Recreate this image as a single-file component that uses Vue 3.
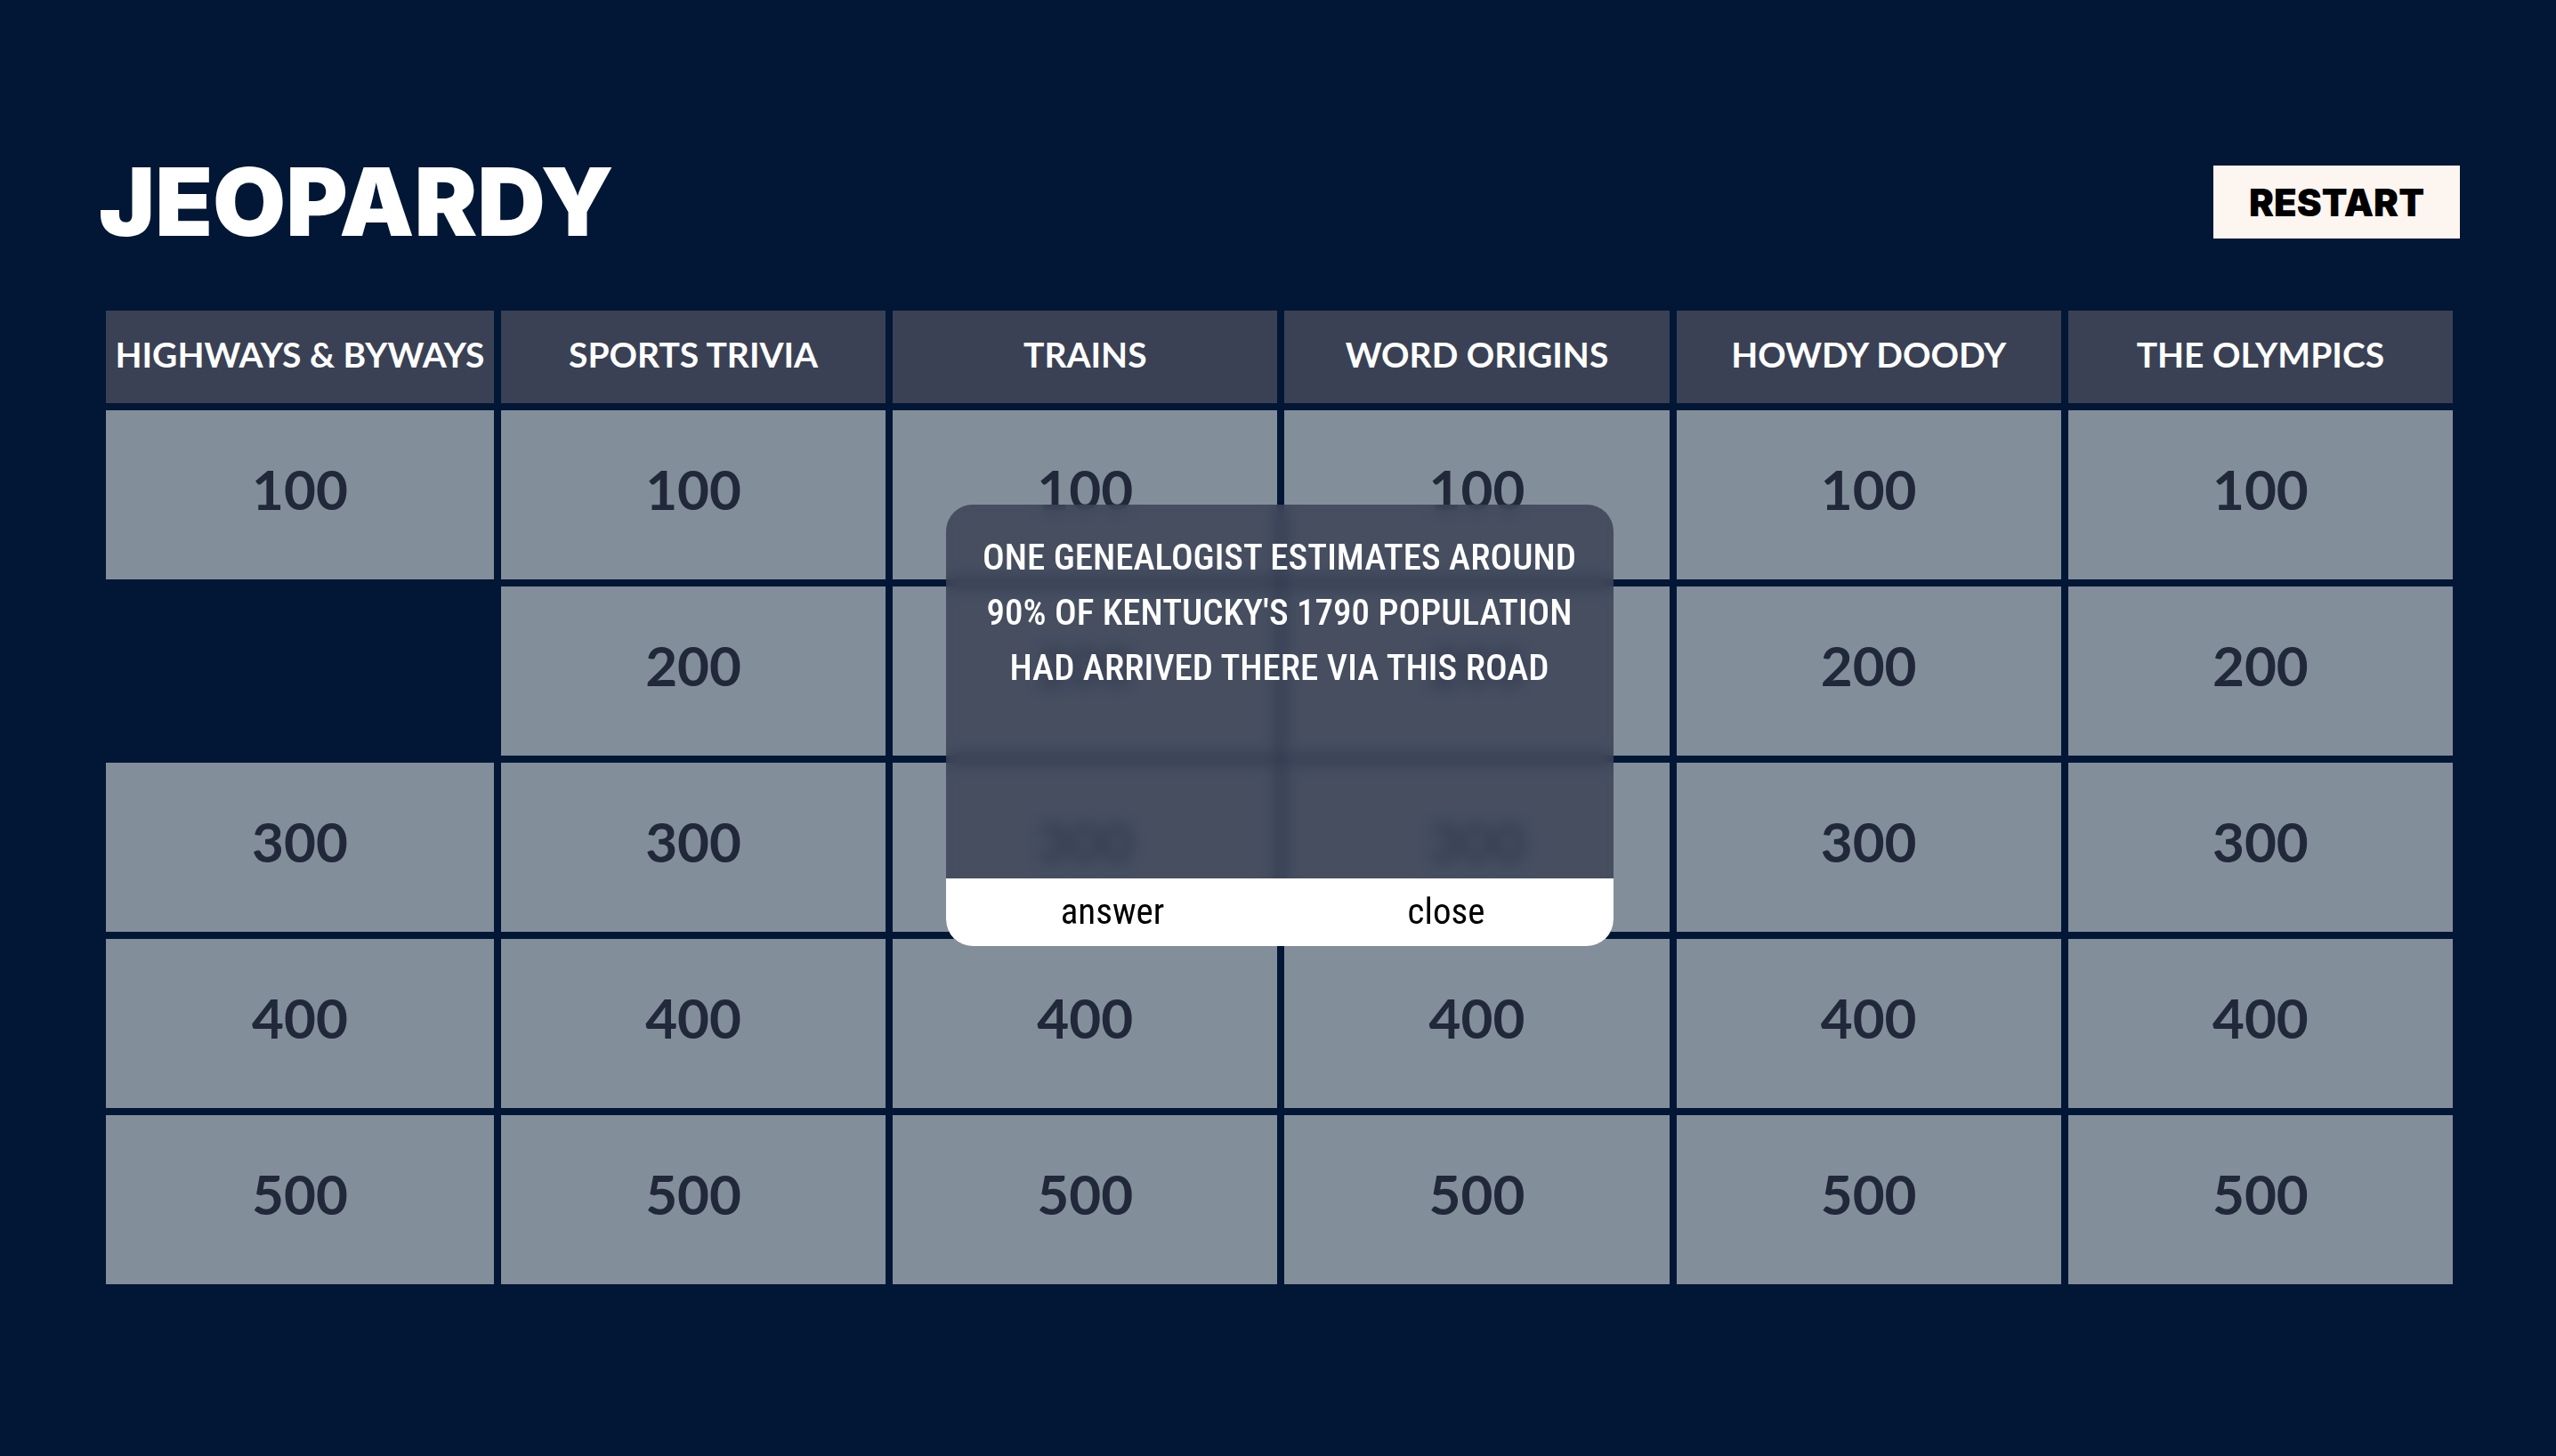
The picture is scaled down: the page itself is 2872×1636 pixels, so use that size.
<script setup>
import { reactive, ref } from 'vue'

const categories = [
  'Highways & Byways',
  'Sports Trivia',
  'Trains',
  'Word Origins',
  'Howdy Doody',
  'The Olympics',
]
const values = [100, 200, 300, 400, 500]

const used = reactive(new Set(['0-200']))
const open = ref(true)

function pick(column, value) {
  used.add(`${column}-${value}`)
  open.value = true
}

function restart() {
  used.clear()
  open.value = false
}
</script>

<template>
  <main class="page">
    <header class="top">
      <h1 class="title">JEOPARDY</h1>
      <button class="restart" type="button" @click="restart">RESTART</button>
    </header>

    <div class="board">
      <table class="grid">
        <colgroup>
          <col class="lead" />
          <col v-for="n in 5" :key="n" />
        </colgroup>
        <thead>
          <tr>
            <th v-for="name in categories" :key="name" scope="col">{{ name }}</th>
          </tr>
        </thead>
        <tbody>
          <tr v-for="value in values" :key="value">
            <td v-for="(name, column) in categories" :key="name">
              <button
                v-if="!used.has(`${column}-${value}`)"
                class="clue"
                type="button"
                @click="pick(column, value)"
              >{{ value }}</button>
            </td>
          </tr>
        </tbody>
      </table>

      <section v-if="open" class="modal" role="dialog" aria-labelledby="question">
        <p id="question" class="question">One genealogist estimates around 90% of Kentucky's 1790 population had arrived there via this road</p>
        <div class="actions">
          <button class="action" type="button">answer</button>
          <button class="action" type="button" @click="open = false">close</button>
        </div>
      </section>
    </div>
  </main>
</template>

<style>
html {
  background: #021735;
}
</style>

<style scoped>
.page {
  padding: 177px 108px 0 111px;
  color: #fff;
  font-family: Lato, "Open Sans", sans-serif;
}

.top {
  display: flex;
  align-items: center;
  justify-content: space-between;
  height: 100px;
}

.title {
  margin: 0;
  font-family: Inter, sans-serif;
  font-size: 106px;
  font-weight: 900;
  line-height: 100px;
}

.restart {
  height: 82px;
  padding: 0 40px;
  border: 0;
  background: #fdf5ef;
  color: #000;
  font-family: Inter, sans-serif;
  font-size: 42px;
  font-weight: 900;
}

.board {
  position: relative;
  margin-top: 64px;
}

.grid {
  width: 100%;
  table-layout: fixed;
  border-collapse: separate;
  border-spacing: 8px;
}

.lead {
  width: 436px;
}

th {
  height: 104px;
  box-sizing: border-box;
  padding: 0 0 6px;
  background: #3a4154;
  font-size: 39px;
  font-weight: 700;
  text-transform: uppercase;
  white-space: nowrap;
}

td {
  height: 190px;
  padding: 0;
}

.clue {
  display: block;
  width: 100%;
  height: 190px;
  padding: 0 0 14px;
  border: 0;
  background: #838e9b;
  color: #20283a;
  font-family: inherit;
  font-size: 62px;
  font-weight: 700;
}

.modal {
  position: absolute;
  top: 226px;
  left: 50%;
  display: flex;
  flex-direction: column;
  box-sizing: border-box;
  width: 750px;
  min-height: 496px;
  margin-left: -375px;
  overflow: hidden;
  border-radius: 30px;
  background: rgba(55, 63, 82, 0.81);
  backdrop-filter: blur(8px);
}

.question {
  flex: 1;
  margin: 0;
  padding: 28px 32px;
  font-family: "Roboto Condensed", Roboto, sans-serif;
  font-size: 41px;
  font-weight: 500;
  line-height: 62px;
  text-align: center;
  text-transform: uppercase;
}

.actions {
  display: flex;
  height: 76px;
  background: #fff;
}

.action {
  flex: 1;
  padding: 0 0 2px;
  border: 0;
  background: transparent;
  color: #000;
  font-family: "Roboto Condensed", Roboto, sans-serif;
  font-size: 41px;
}
</style>
